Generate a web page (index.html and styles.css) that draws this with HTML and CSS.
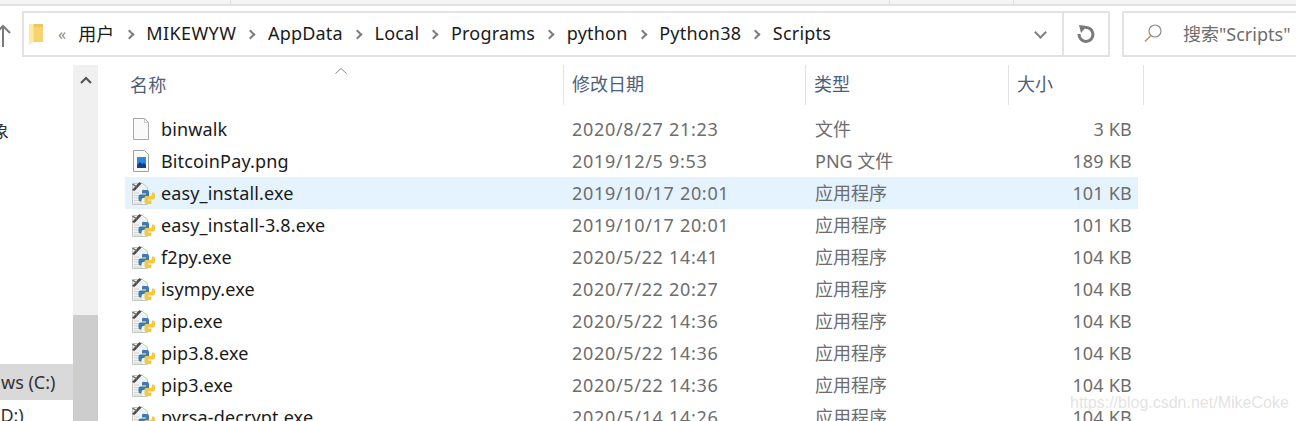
FILE: index.html
```html
<!DOCTYPE html>
<html lang="zh-CN">
<head>
  <meta charset="UTF-8" />
  <title>Scripts</title>
  <link rel="stylesheet" href="styles.css">
</head>
<body>
  <svg class="defs" width="0" height="0">
    <symbol id="py" viewBox="0 0 24 24">
      <path d="M1.500 2.500h10l5 4v17h-15z" fill="#f2f2f2" stroke="#c4c4c4"/>
      <path d="M3 12h5M3 14.500h5M3 17h5M3 19.500h6M3 22h8" stroke="#d4d4d4"/>
      <path d="M1 9 8.500 1l2 1.500L3.500 10z" fill="#4a4a4a"/>
      <path d="M1.500 3l5 3.500" stroke="#6a6a6a" stroke-width="1.500"/>
      <path d="M12.500 9h3.500q2 0 2 2v4.500q0 1.500-1.500 1.500h-4q-2 0-2 2v1.500h-1.500q-1.500 0-1.500-2.500v-2.500q0-2 2-2h5.500v-1h-4v-2q0-2 1.500-2z" fill="#3c7ab0"/>
      <path d="M12.500 9h3.500q2 0 2 2v4.500q0 1.500-1.500 1.500h-4q-2 0-2 2v1.500h-1.500q-1.500 0-1.500-2.500v-2.500q0-2 2-2h5.500v-1h-4v-2q0-2 1.500-2z" fill="#f5c93e" transform="rotate(180 15.750 16)"/>
    </symbol>
  </svg>

  <div class="top-strip">
    <div class="strip-cell first"></div>
    <div class="strip-cell second"></div>
    <div class="strip-cell third"></div>
  </div>

  <div class="toolbar">
    <div class="up-btn">
      <svg width="16" height="24" viewBox="0 0 16 24"><path d="M3 3v21M-4 10l7-7 7 7" fill="none" stroke="#7a7a7a" stroke-width="2"/></svg>
    </div>
    <div class="address">
      <svg class="folder" width="15" height="21" viewBox="0 0 15 21">
        <path d="M4 0h10v18H4z" fill="#f6d36f"/>
        <path d="M4 0h10v3H4z" fill="#eec65f"/>
        <path d="M0 0h4.500l0 18L0 21z" fill="#fdeaa5"/>
      </svg>
      <span class="more">«</span>
      <span class="crumb">用户</span><i class="sep"></i>
      <span class="crumb wide">MIKEWYW</span><i class="sep"></i>
      <span class="crumb">AppData</span><i class="sep"></i>
      <span class="crumb">Local</span><i class="sep"></i>
      <span class="crumb">Programs</span><i class="sep"></i>
      <span class="crumb">python</span><i class="sep"></i>
      <span class="crumb">Python38</span><i class="sep"></i>
      <span class="crumb">Scripts</span>
      <div class="addr-end">
        <i class="chev"></i>
        <div class="refresh">
          <svg width="20" height="20" viewBox="0 0 20 20"><path d="M9 3.500A7 7 0 1 1 3 10" fill="none" stroke="#7a7a7a" stroke-width="3"/><path d="M3 1l8 1-6 7z" fill="#7a7a7a"/></svg>
        </div>
      </div>
    </div>
    <div class="search">
      <svg width="20" height="20" viewBox="0 0 20 20"><circle cx="12" cy="8" r="6" fill="none" stroke="#8a8a8a" stroke-width="1.200"/><path d="M8 12.500 2 18.500" stroke="#b98a5a" stroke-width="1.400"/></svg>
      <span>搜索"Scripts"</span>
    </div>
  </div>

  <div class="main">
    <div class="sidebar">
      <div class="side-clip">象</div>
      <div class="side-drive current">ws (C:)</div>
      <div class="side-drive">(D:)</div>
    </div>
    <div class="scrollbar">
      <svg width="14" height="10" viewBox="0 0 14 10"><path d="M2 8l5-5 5 5" fill="none" stroke="#555" stroke-width="2.200"/></svg>
      <div class="thumb"></div>
    </div>

    <div class="files">
      <div class="head">
        <div class="col-name">名称<svg class="sort" width="12" height="6" viewBox="0 0 12 6"><path d="M.5 5.500 6 .5l5.500 5" fill="none" stroke="#8a8a8a"/></svg></div>
        <div class="col-date">修改日期</div>
        <div class="col-type">类型</div>
        <div class="col-size">大小</div>
      </div>

      <div class="row">
        <div class="col-name">
          <svg class="icon" width="24" height="24" viewBox="0 0 24 24"><path d="M2.500 1.500h11l4 4v17h-15z" fill="#fafafa" stroke="#a8a8a8"/><path d="M13.500 1.500v4h4" fill="none" stroke="#c4c4c4"/></svg>
          binwalk
        </div>
        <div class="col-date">2020/8/27 21:23</div>
        <div class="col-type">文件</div>
        <div class="col-size">3 KB</div>
      </div>
      <div class="row">
        <div class="col-name">
          <svg class="icon" width="24" height="24" viewBox="0 0 24 24"><path d="M2.500 1.500h11l4 4v17h-15z" fill="#fafafa" stroke="#a0a0a0"/><rect x="6" y="8" width="9" height="11" fill="#2b8ae0"/><path d="M6 19v-3l3-3 2 2 2-1 2 2v3z" fill="#123f86"/></svg>
          BitcoinPay.png
        </div>
        <div class="col-date">2019/12/5 9:53</div>
        <div class="col-type">PNG 文件</div>
        <div class="col-size">189 KB</div>
      </div>
      <div class="row selected">
        <div class="col-name"><svg class="icon" width="24" height="24"><use href="#py"/></svg>easy_install.exe</div>
        <div class="col-date">2019/10/17 20:01</div>
        <div class="col-type">应用程序</div>
        <div class="col-size">101 KB</div>
      </div>
      <div class="row">
        <div class="col-name"><svg class="icon" width="24" height="24"><use href="#py"/></svg>easy_install-3.8.exe</div>
        <div class="col-date">2019/10/17 20:01</div>
        <div class="col-type">应用程序</div>
        <div class="col-size">101 KB</div>
      </div>
      <div class="row">
        <div class="col-name"><svg class="icon" width="24" height="24"><use href="#py"/></svg>f2py.exe</div>
        <div class="col-date">2020/5/22 14:41</div>
        <div class="col-type">应用程序</div>
        <div class="col-size">104 KB</div>
      </div>
      <div class="row">
        <div class="col-name"><svg class="icon" width="24" height="24"><use href="#py"/></svg>isympy.exe</div>
        <div class="col-date">2020/7/22 20:27</div>
        <div class="col-type">应用程序</div>
        <div class="col-size">104 KB</div>
      </div>
      <div class="row">
        <div class="col-name"><svg class="icon" width="24" height="24"><use href="#py"/></svg>pip.exe</div>
        <div class="col-date">2020/5/22 14:36</div>
        <div class="col-type">应用程序</div>
        <div class="col-size">104 KB</div>
      </div>
      <div class="row">
        <div class="col-name"><svg class="icon" width="24" height="24"><use href="#py"/></svg>pip3.8.exe</div>
        <div class="col-date">2020/5/22 14:36</div>
        <div class="col-type">应用程序</div>
        <div class="col-size">104 KB</div>
      </div>
      <div class="row">
        <div class="col-name"><svg class="icon" width="24" height="24"><use href="#py"/></svg>pip3.exe</div>
        <div class="col-date">2020/5/22 14:36</div>
        <div class="col-type">应用程序</div>
        <div class="col-size">104 KB</div>
      </div>
      <div class="row">
        <div class="col-name"><svg class="icon" width="24" height="24"><use href="#py"/></svg>pyrsa-decrypt.exe</div>
        <div class="col-date">2020/5/14 14:26</div>
        <div class="col-type">应用程序</div>
        <div class="col-size">104 KB</div>
      </div>
    </div>
  </div>

  <div class="watermark">https://blog.csdn.net/MikeCoke</div>
</body>
</html>
```

FILE: styles.css
```css
* { margin: 0; padding: 0; box-sizing: border-box; }
html, body { height: 421px; overflow: hidden; }
body {
  background-color: #fff;
  color: #1a1a1a;
  font-family: "Noto Sans", "Noto Sans CJK SC", sans-serif;
  font-size: 18px;
  position: relative;
}
.defs { display: block; height: 0; }

.top-strip {
  display: flex;
  height: 6px;
  background-color: #f4f5f7;
  border-bottom: 2px solid #e2e2e2;
}
.strip-cell { border-right: 1px solid #e2e2e2; }
.strip-cell.first { width: 231px; }
.strip-cell.second { width: 659px; }
.strip-cell.third { width: 124px; }

/* address row */
.toolbar {
  display: flex;
  height: 46px;
  margin-top: 5px;
}
.up-btn {
  width: 22px;
  overflow: hidden;
  display: flex;
  align-items: center;
}
.up-btn svg { margin-top: 2px; }
.address {
  width: 1088px;
  display: flex;
  align-items: center;
  border: 2px solid #e2e2e2;
  padding-left: 5px;
}
.folder { margin-right: 14px; }
.more { color: #888; font-size: 16px; margin-right: 12px; }
.crumb { white-space: nowrap; padding-bottom: 2px; letter-spacing: 0.2px; }
.crumb.wide { letter-spacing: 0.4px; }
.sep {
  width: 7px;
  height: 7px;
  border-top: 2px solid #7d7d7d;
  border-right: 2px solid #7d7d7d;
  transform: rotate(45deg);
  margin: 0 13.7px 0 11px;
}
.addr-end {
  margin-left: auto;
  display: flex;
  align-items: center;
  height: 100%;
}
.chev {
  width: 9px;
  height: 9px;
  border-bottom: 2.500px solid #7d7d7d;
  border-right: 2.500px solid #7d7d7d;
  transform: rotate(45deg);
  margin: 0 17px 4px 0;
}
.refresh {
  width: 46px;
  height: 100%;
  border-left: 2px solid #e2e2e2;
  display: flex;
  align-items: center;
  justify-content: center;
}
.search {
  flex: 1;
  margin-left: 12px;
  border: 2px solid #e2e2e2;
  border-right: none;
  display: flex;
  align-items: center;
  gap: 20px;
  padding-left: 19px;
  padding-bottom: 2px;
  color: #6d6d6d;
  white-space: nowrap;
}

/* left pane */
.main {
  display: flex;
  height: 365px;
  margin-top: 8px;
}
.sidebar {
  width: 73px;
  overflow: hidden;
  display: flex;
  flex-direction: column;
  color: #333;
}
.side-clip { margin: 52px 0 0 -9px; line-height: 28px; }
.side-drive { height: 36px; line-height: 36px; white-space: nowrap; }
.side-drive.current { margin-top: 219px; background-color: #d9d9d9; padding-left: 1px; }
.side-drive:last-child { margin: -3px 0 0 -5px; }

.scrollbar {
  width: 25px;
  background-color: #f0f0f0;
  display: flex;
  flex-direction: column;
  align-items: center;
  padding-top: 10px;
}
.scrollbar .thumb {
  width: 100%;
  background-color: #cdcdcd;
  flex: 1;
  margin-top: 230px;
}

/* file list */
.files { margin-left: 27px; width: 1020px; flex-shrink: 0; }
.head, .row { display: flex; align-items: center; }
.col-name { width: 438px; flex-shrink: 0; display: flex; align-items: center; white-space: nowrap; position: relative; letter-spacing: 0.14px; }
.col-date { width: 243px; flex-shrink: 0; white-space: nowrap; }
.col-type { width: 203px; flex-shrink: 0; white-space: nowrap; }
.col-size { width: 136px; flex-shrink: 0; white-space: nowrap; }

.head { height: 40px; margin-bottom: 8px; color: #4c607a; }
.head .col-name { padding-left: 5px; padding-bottom: 3px; }
.head .col-date { width: 242px; }
.head .col-date, .head .col-type, .head .col-size { height: 40px; line-height: 39px; border-left: 1px solid #e2e2e2; padding-left: 8px; }
.head .col-size { border-right: 1px solid #e2e2e2; }
.sort { position: absolute; left: 210px; top: -3px; }

.row { height: 32px; color: #6d6d6d; width: 1013px; }
.row .col-name { color: #1a1a1a; padding-left: 6px; }
.row .col-date { padding-left: 9px; letter-spacing: 0.68px; }
.row .col-type { padding-left: 9px; padding-bottom: 2px; }
.row .col-size { width: 123px; text-align: right; letter-spacing: 0.2px; }
.row .icon { margin-right: 6px; flex-shrink: 0; }
.row.selected { background-color: #e5f3ff; }

.watermark {
  position: absolute;
  left: 1070px;
  top: 394px;
  font-family: "Liberation Sans", sans-serif;
  font-size: 16px;
  color: rgba(190, 190, 190, 0.45);
  white-space: nowrap;
}
```
